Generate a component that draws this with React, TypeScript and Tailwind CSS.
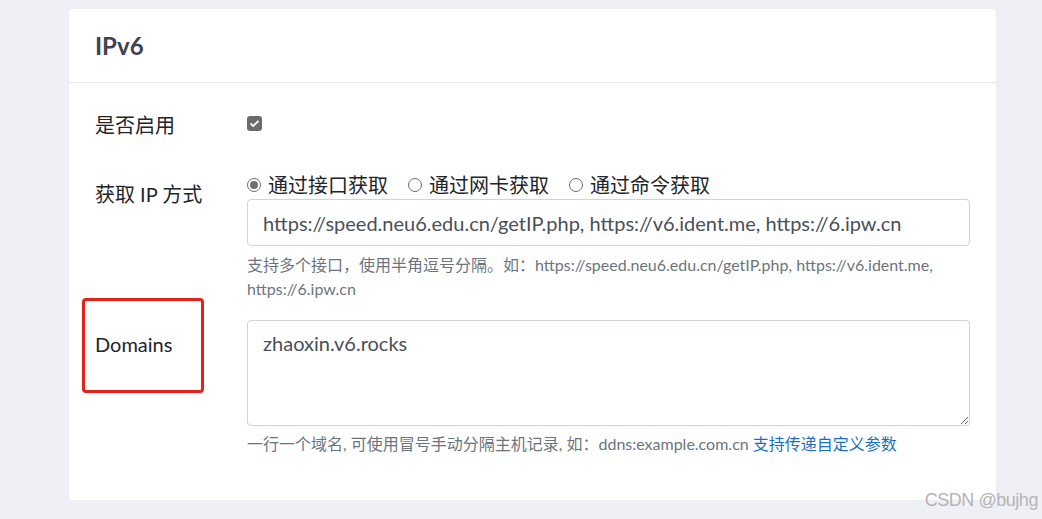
import React from 'react';

const FONT = { fontFamily: 'Lato, "Noto Sans CJK SC", sans-serif' };

function Radio({ checked, label }: { checked?: boolean; label: string }) {
  return (
    <label className="flex items-center gap-[7px] mr-[20px]">
      <span className="w-[14px] h-[14px] rounded-full border border-[#6d6d6d] flex items-center justify-center bg-white">
        {checked && <span className="w-[8px] h-[8px] rounded-full bg-[#6d6d6d]" />}
      </span>
      <span>{label}</span>
    </label>
  );
}

export default function App() {
  return (
    <div className="relative min-h-[519px] bg-[#eff0f5] pt-[9px] pl-[69px] pr-[46px] text-[#212529]" style={FONT}>
      <div className="w-[927px] bg-white rounded-[4px] shadow-[0_0_2px_rgba(0,0,0,0.04)]">
        {/* header */}
        <div className="h-[74px] flex items-center px-[26px] border-b border-[#e9eaee]">
          <h2 className="text-[24px] font-bold text-[#3d4254]">IPv6</h2>
        </div>

        <div className="px-[26px] pt-[28px] pb-[44px] text-[20px]">
          {/* enabled */}
          <div className="flex leading-[28px]">
            <div className="w-[152px]">是否启用</div>
            <span className="mt-[5px] w-[15px] h-[15px] rounded-[3px] bg-[#6b6b6b] flex items-center justify-center">
              <svg width="11" height="11" viewBox="0 0 16 16" fill="none">
                <path d="M3 8.5l3.2 3.2L13 4.8" stroke="white" strokeWidth="2.6" strokeLinecap="round" strokeLinejoin="round" />
              </svg>
            </span>
          </div>

          {/* ip mode */}
          <div className="flex mt-[32px]">
            <div className="w-[152px] leading-[28px] mt-[9px]">获取 IP 方式</div>
            <div className="flex-1">
              <div className="flex h-[28px] items-center leading-[28px]">
                <Radio checked label="通过接口获取" />
                <Radio label="通过网卡获取" />
                <Radio label="通过命令获取" />
              </div>
              <div className="h-[47px] border border-[#ced4da] rounded-[4px] flex items-center px-[15px] text-[#495057]">
                https://speed.neu6.edu.cn/getIP.php, https://v6.ident.me, https://6.ipw.cn
              </div>
              <div className="mt-[7px] text-[16px] leading-[24px] text-[#6c757d]">
                支持多个接口，使用半角逗号分隔。如：https://speed.neu6.edu.cn/getIP.php, https://v6.ident.me, https://6.ipw.cn
              </div>
            </div>
          </div>

          {/* domains */}
          <div className="flex mt-[19px]">
            <div className="w-[152px] relative">
              <div className="leading-[28px] mt-[10px]">Domains</div>
              <div className="absolute left-[-13px] top-[-22px] w-[122px] h-[95px] border-[3px] border-[#e3231b] rounded-[4px]" />
            </div>
            <div className="flex-1">
              <textarea
                className="block w-full h-[106px] border border-[#ced4da] rounded-[4px] px-[15px] py-[8px] leading-[28px] text-[#495057] outline-none"
                defaultValue="zhaoxin.v6.rocks"
                style={FONT}
              />
              <div className="mt-[6px] text-[16px] leading-[24px] text-[#6c757d]">
                一行一个域名, 可使用冒号手动分隔主机记录, 如：ddns:example.com.cn{' '}
                <a className="text-[#1a6fc4]">支持传递自定义参数</a>
              </div>
            </div>
          </div>
        </div>
      </div>

      <div className="absolute right-[4px] top-[487px] text-[18px] text-[#b5b5b5] tracking-tight" style={{ fontFamily: '"Liberation Sans", Arial, sans-serif' }}>
        CSDN @bujhg
      </div>
    </div>
  );
}
